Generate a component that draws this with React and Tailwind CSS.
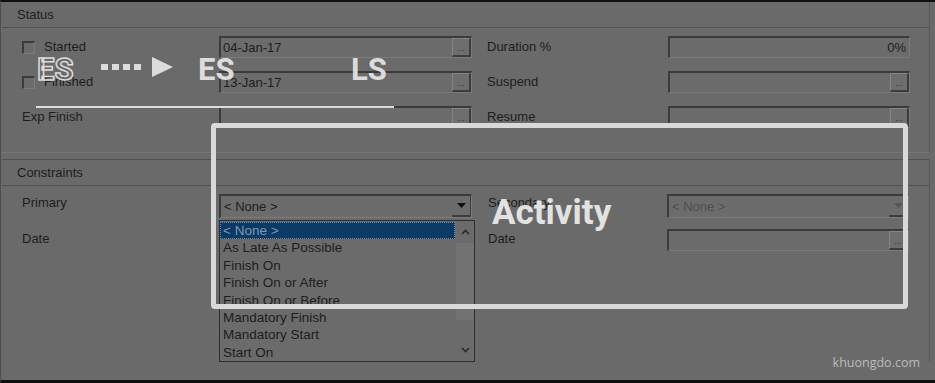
import React from "react";

const ui = "font-['Liberation_Sans',Arial,sans-serif] text-[13px] text-[#1d1d1d]";

function DotsButton() {
  return (
    <div className="flex h-full w-[19px] shrink-0 items-end justify-center border-t border-l border-t-[#858585] border-l-[#858585] border-b-2 border-r-2 border-b-[#3c3c3c] border-r-[#3c3c3c] bg-[#6e6e6e] pb-[2px] text-[9px] leading-none text-[#333]">
      ...
    </div>
  );
}

function Field({ width, value, align = "left", button = true }) {
  return (
    <div
      className="flex h-[22px] shrink-0 border-t-2 border-l-2 border-t-[#3b3b3b] border-l-[#3b3b3b] border-b border-r border-b-[#7b7b7b] border-r-[#7b7b7b] bg-[#6c6c6c]"
      style={{ width }}
    >
      <div
        className={`flex flex-1 items-center px-[2px] ${align === "right" ? "justify-end pr-[3px]" : ""}`}
      >
        {value}
      </div>
      {button && <DotsButton />}
    </div>
  );
}

function Checkbox() {
  return (
    <div className="h-[13px] w-[13px] shrink-0 border-t-2 border-l-2 border-t-[#3b3b3b] border-l-[#3b3b3b] border-b border-r border-b-[#7b7b7b] border-r-[#7b7b7b] bg-[#6c6c6c]" />
  );
}

function Dropdown({ width, disabled }) {
  return (
    <div
      className="flex h-[24px] shrink-0 border-t-2 border-l-2 border-t-[#3b3b3b] border-l-[#3b3b3b] border-b border-r border-b-[#7b7b7b] border-r-[#7b7b7b] bg-[#6c6c6c]"
      style={{ width }}
    >
      <div className={`flex flex-1 items-center px-[3px] ${disabled ? "text-[#4e4e4e]" : ""}`}>
        &lt; None &gt;
      </div>
      <div className="flex w-[19px] shrink-0 items-center justify-center border-b-2 border-r border-b-[#3c3c3c] border-r-[#3c3c3c]">
        <svg width="9" height="5" viewBox="0 0 9 5">
          <path d="M0 0h9L4.5 5z" fill={disabled ? "#555" : "#111"} />
        </svg>
      </div>
    </div>
  );
}

const options = [
  "As Late As Possible",
  "Finish On",
  "Finish On or After",
  "Finish On or Before",
  "Mandatory Finish",
  "Mandatory Start",
  "Start On",
];

function ListBox() {
  return (
    <div className="mt-[2px] flex h-[142px] w-[256px] border border-[#2e2e2e] bg-[#6b6b6b] text-[13.5px]">
      <div className="flex-1 pt-px leading-[17.4px]">
        <div className="mr-px border border-dotted border-[#6f8aa6] bg-[#0c3a66] pl-[2px] leading-[15.4px] text-[#7f97b1]">
          &lt; None &gt;
        </div>
        {options.map((o) => (
          <div key={o} className="pl-[3px]">
            {o}
          </div>
        ))}
      </div>
      <div className="flex w-[18px] flex-col">
        <div className="flex h-[22px] items-center justify-center">
          <svg width="9" height="6" viewBox="0 0 9 6">
            <path d="M1 5l3.5-3.5L8 5" stroke="#2a2a2a" strokeWidth="1.6" fill="none" />
          </svg>
        </div>
        <div className="h-[77px] bg-[#727272]" />
        <div className="flex-1" />
        <div className="flex h-[22px] items-center justify-center">
          <svg width="9" height="6" viewBox="0 0 9 6">
            <path d="M1 1l3.5 3.5L8 1" stroke="#2a2a2a" strokeWidth="1.6" fill="none" />
          </svg>
        </div>
      </div>
    </div>
  );
}

function StatusRow({ check, label, value, rightLabel, rightValue, rightAlign, rightButton }) {
  return (
    <div className="flex h-[22px] items-center">
      <div className="flex w-[217px] shrink-0 items-center gap-[9px] pl-[20px]">
        {check && <Checkbox />}
        <span>{label}</span>
      </div>
      <Field width={253} value={value} />
      <div className="ml-[15px] w-[181px] shrink-0">{rightLabel}</div>
      <Field width={242} value={rightValue} align={rightAlign} button={rightButton} />
    </div>
  );
}

export default function App() {
  return (
    <div className={`relative h-[383px] w-[935px] overflow-hidden border-t-2 border-b-[3px] border-l border-[#101010] border-l-[#4e4e4e] bg-[#6a6a6a] ${ui}`}>
      {/* Status */}
      <div className="ml-px h-[151px] w-[928px] border-r border-b border-r-[#575757] border-b-[#767676]">
        <div className="flex h-[26px] items-center border-b border-[#525252] pl-[15px]">Status</div>
        <div className="flex flex-col gap-[13px] pt-[8px]">
          <StatusRow check label="Started" value="04-Jan-17" rightLabel="Duration %" rightValue="0%" rightAlign="right" rightButton={false} />
          <StatusRow check label="Finished" value="13-Jan-17" rightLabel="Suspend" rightValue="" rightButton />
          <StatusRow label="Exp Finish" value="" rightLabel="Resume" rightValue="" rightButton />
        </div>
      </div>

      {/* Constraints */}
      <div className="ml-px mt-[6px] w-[928px] border-r border-[#575757]">
        <div className="flex h-[27px] items-center border-t border-b border-[#525252] pl-[15px]">Constraints</div>
        <div className="flex pt-[8px]">
          <div className="flex w-[217px] shrink-0 flex-col pl-[20px]">
            <div className="h-[20px] leading-[18px]">Primary</div>
            <div className="mt-[15px] h-[20px] leading-[20px]">Date</div>
          </div>
          <div className="flex w-[256px] shrink-0 flex-col">
            <Dropdown width={253} />
            <ListBox />
          </div>
          <div className="ml-[13px] flex w-[179px] shrink-0 flex-col">
            <div className="h-[20px] leading-[18px]">Secondary</div>
            <div className="mt-[15px] h-[20px] leading-[20px]">Date</div>
          </div>
          <div className="flex w-[242px] shrink-0 flex-col">
            <Dropdown width={242} disabled />
            <div className="mt-[11px]">
              <Field width={242} value="" />
            </div>
          </div>
        </div>
      </div>

      {/* overlay annotations */}
      <div className="pointer-events-none absolute left-[36px] top-[52px] font-['Roboto',sans-serif] text-[31px] font-bold leading-none text-transparent [-webkit-text-stroke:1.5px_#dcdcdc]">
        ES
      </div>
      <div className="pointer-events-none absolute left-[100px] top-[55px] flex items-center">
        <div className="flex gap-[4px]">
          <div className="h-[6px] w-[7px] bg-[#dcdcdc]" />
          <div className="h-[6px] w-[7px] bg-[#dcdcdc]" />
          <div className="h-[6px] w-[7px] bg-[#dcdcdc]" />
          <div className="h-[6px] w-[7px] bg-[#dcdcdc]" />
        </div>
        <svg className="ml-[11px]" width="21" height="20" viewBox="0 0 21 20">
          <path d="M0 0L21 10L0 20z" fill="#dcdcdc" />
        </svg>
      </div>
      <div className="pointer-events-none absolute left-[197px] top-[52px] font-['Roboto',sans-serif] text-[31px] font-bold leading-none text-[#dcdcdc]">
        ES
      </div>
      <div className="pointer-events-none absolute left-[350px] top-[52px] font-['Roboto',sans-serif] text-[31px] font-bold leading-none text-[#dcdcdc]">
        LS
      </div>
      <div className="pointer-events-none absolute left-[35px] top-[104px] h-[2px] w-[358px] bg-[#dcdcdc]" />
      <div className="pointer-events-none absolute left-[210px] top-[121px] h-[186px] w-[697px] rounded-[4px] border-[5px] border-[#d9d9d9]" />
      <div className="pointer-events-none absolute left-[491px] top-[193px] font-['Roboto',sans-serif] text-[35px] font-bold leading-none text-[#e2e2e2]">
        Activity
      </div>
      <div className="pointer-events-none absolute right-[15px] top-[352px] font-['Open_Sans',sans-serif] text-[12.5px] text-[#bcbcbc]">
        khuongdo.com
      </div>
    </div>
  );
}
